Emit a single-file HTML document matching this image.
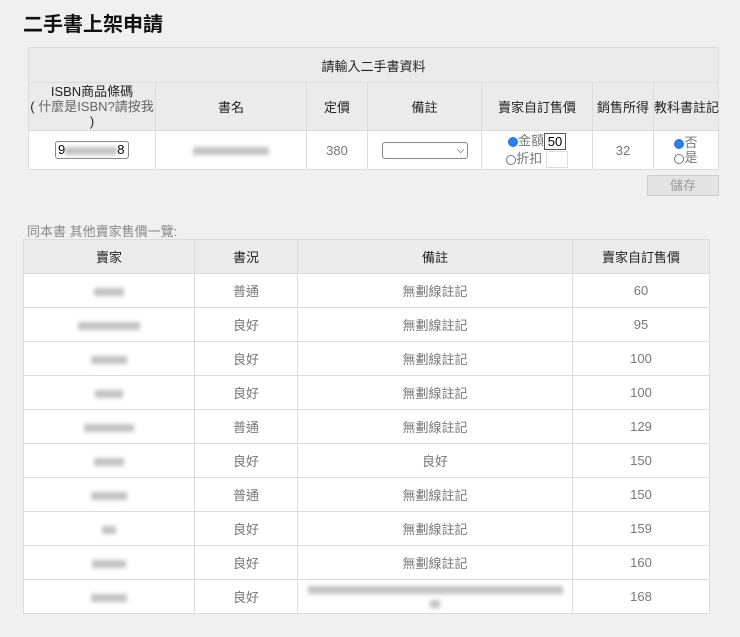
<!DOCTYPE html><html><head><meta charset="utf-8"><style>
body{margin:0;background:#f0f0f0;font-family:"Liberation Sans","Noto Sans CJK TC",sans-serif;font-size:13px;color:#222;width:740px;height:637px;overflow:hidden;position:relative}
h1{position:absolute;left:23px;top:8px;margin:0;font-size:20px;font-weight:bold;color:#111}
table{border-collapse:collapse;position:absolute;table-layout:fixed}
td,th{border:1px solid #dcdcdc;text-align:center;padding:0;font-weight:normal;white-space:nowrap}
th{background:#ebebeb;color:#222}
td{background:#fff;color:#777}
.bl{display:inline-block;height:8px;background:#999;filter:blur(2px);opacity:.6;vertical-align:middle}
.r{display:inline-block;width:10px;height:10px;border-radius:50%;border:1px solid #777;vertical-align:middle;box-sizing:border-box;background:#fff}
.r.on{border:3px solid #2a7ae2;background:#fff;box-shadow:inset 0 0 0 3px #2a7ae2}
</style></head><body>
<h1>二手書上架申請</h1>
<table style="left:28px;top:47px;width:691px">
<colgroup><col style="width:127px"><col style="width:151px"><col style="width:61px"><col style="width:114px"><col style="width:111px"><col style="width:61px"><col></colgroup>
<tr><th colspan="7" style="height:34px">請輸入二手書資料</th></tr>
<tr style="height:48px"><th style="line-height:15px;white-space:normal">ISBN商品條碼<br>( <span style="color:#666">什麼是ISBN?請按我</span><br>)</th><th>書名</th><th>定價</th><th>備註</th><th>賣家自訂售價</th><th>銷售所得</th><th>教科書註記</th></tr>
<tr style="height:39px"><td><span style="display:inline-block;width:70px;height:16px;border:1px solid #888;border-radius:3px;text-align:left;color:#000;padding-left:2px;line-height:16px;white-space:nowrap">9<span class="bl" style="width:52px"></span>8</span></td>
<td><span class="bl" style="width:76px"></span></td><td>380</td>
<td><span style="display:inline-block;width:82px;height:15px;border:1px solid #888;border-radius:3px;text-align:right;font-size:10px;line-height:15px;padding-right:2px;color:#333">⌵</span></td>
<td style="line-height:17px"><span class="r on"></span>金額<span style="display:inline-block;width:20px;height:15px;border:1px solid #555;color:#000;line-height:15px;vertical-align:middle">50</span><br><span class="r"></span>折扣 <span style="display:inline-block;width:20px;height:15px;border:1px solid #ddd;vertical-align:middle"></span></td>
<td>32</td><td style="line-height:15px"><span class="r on"></span>否<br><span class="r"></span>是</td></tr>
</table>
<div style="position:absolute;left:647px;top:175px;width:70px;height:19px;background:#e4e4e4;border:1px solid #ccc;color:#999;text-align:center;line-height:19px">儲存</div>
<div style="position:absolute;left:27px;top:221px;color:#888">同本書 其他賣家售價一覽:</div>
<table style="left:23px;top:239px;width:687px">
<colgroup><col style="width:171px"><col style="width:103px"><col style="width:275px"><col></colgroup>
<tr style="height:34px"><th>賣家</th><th>書況</th><th>備註</th><th>賣家自訂售價</th></tr>
<tr style="height:34px"><td><span class="bl" style="width:30px"></span></td><td>普通</td><td>無劃線註記</td><td>60</td></tr>
<tr style="height:34px"><td><span class="bl" style="width:62px"></span></td><td>良好</td><td>無劃線註記</td><td>95</td></tr>
<tr style="height:34px"><td><span class="bl" style="width:36px"></span></td><td>良好</td><td>無劃線註記</td><td>100</td></tr>
<tr style="height:34px"><td><span class="bl" style="width:28px"></span></td><td>良好</td><td>無劃線註記</td><td>100</td></tr>
<tr style="height:34px"><td><span class="bl" style="width:50px"></span></td><td>普通</td><td>無劃線註記</td><td>129</td></tr>
<tr style="height:34px"><td><span class="bl" style="width:30px"></span></td><td>良好</td><td>良好</td><td>150</td></tr>
<tr style="height:34px"><td><span class="bl" style="width:36px"></span></td><td>普通</td><td>無劃線註記</td><td>150</td></tr>
<tr style="height:34px"><td><span class="bl" style="width:14px"></span></td><td>良好</td><td>無劃線註記</td><td>159</td></tr>
<tr style="height:34px"><td><span class="bl" style="width:34px"></span></td><td>良好</td><td>無劃線註記</td><td>160</td></tr>
<tr style="height:34px"><td><span class="bl" style="width:36px"></span></td><td>良好</td><td style="line-height:14px"><span class="bl" style="width:255px"></span><br><span class="bl" style="width:10px"></span></td><td>168</td></tr>
</table>
</body></html>
